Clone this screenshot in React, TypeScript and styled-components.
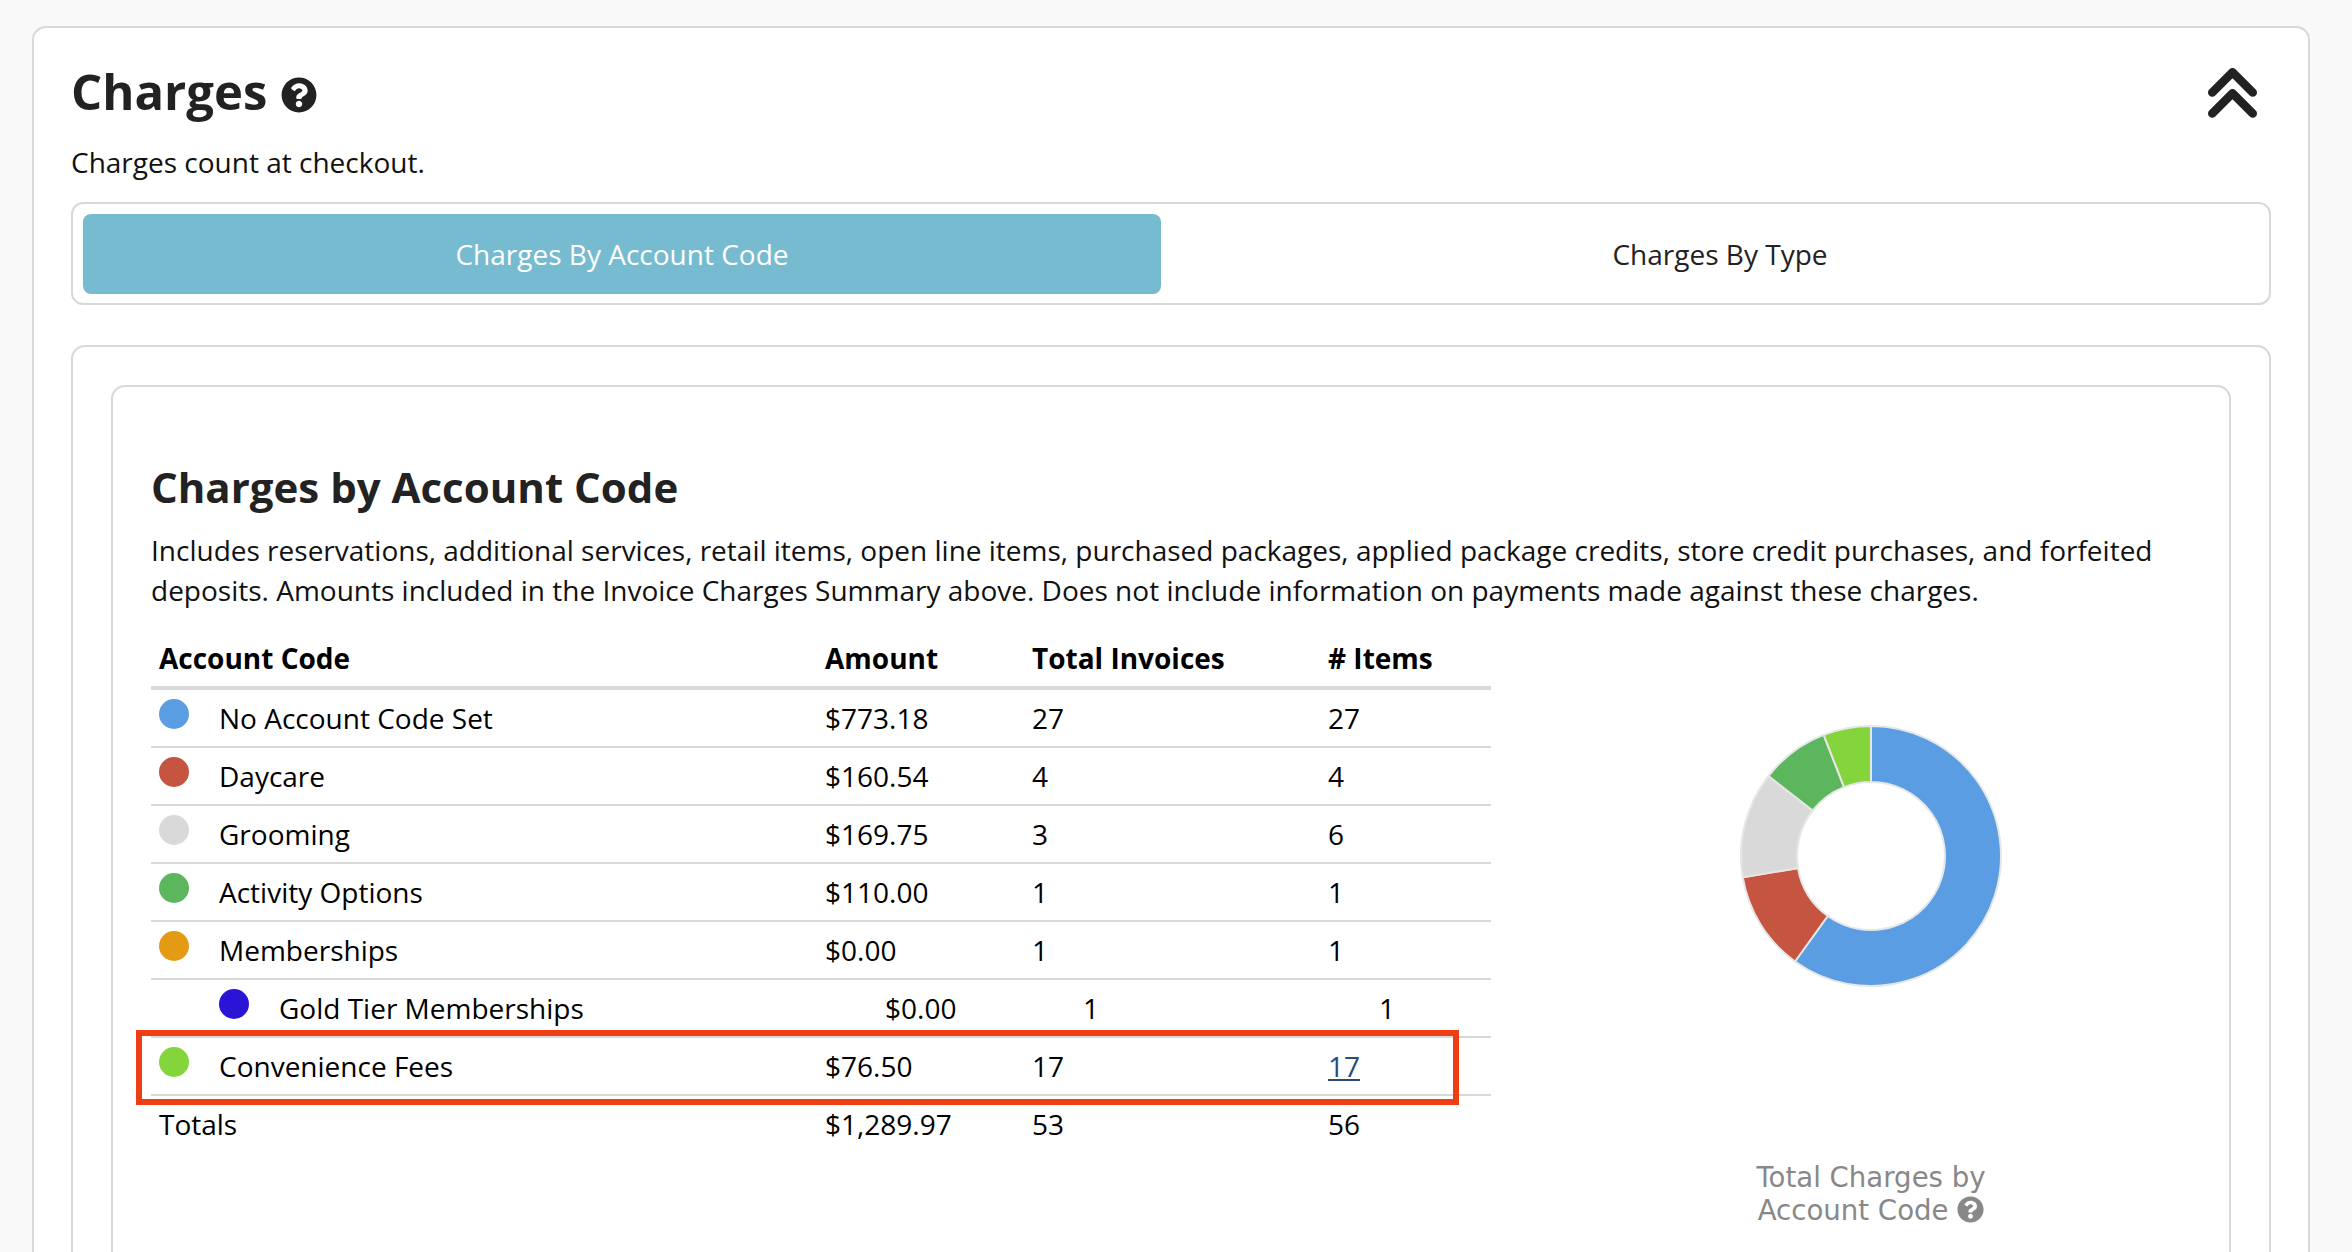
import React from 'react';
import styled, { createGlobalStyle } from 'styled-components';
import { FaQuestionCircle } from 'react-icons/fa';

const GlobalStyle = createGlobalStyle`
  html, body {
    margin: 0;
    height: 100%;
    overflow: hidden;
    background: #f9f9f9;
  }

  body {
    font-family: "Open Sans", "Liberation Sans", sans-serif;
    font-size: 28px;
    color: #000;
  }
`;

const Page = styled.div`
  height: 1252px;
  overflow: hidden;
  padding: 26px 42px 0 32px;
  box-sizing: border-box;
`;

const Card = styled.section`
  background: #fff;
  border: 2px solid #d8d8d8;
  border-radius: 14px;
  padding: 0 37px;
  min-height: 1400px;
`;

const CardHeader = styled.header`
  display: flex;
  justify-content: space-between;
  align-items: flex-start;
  height: 174px;
`;

const Title = styled.h1`
  display: flex;
  align-items: center;
  gap: 14px;
  margin: 28px 0 0;
  height: 70px;
  font-size: 49px;
  font-weight: 700;
  color: #222;

  svg {
    width: 36px;
    height: 36px;
    margin-top: 7px;
  }
`;

const Subtitle = styled.p`
  margin: 16px 0 0;
  line-height: 40px;
  color: #111;
`;

const CollapseButton = styled.button`
  display: flex;
  border: 0;
  padding: 0;
  margin: 40px 14px 0 0;
  background: none;
  color: #222;

  svg {
    width: 49px;
    height: 50px;
  }
`;

const Tabs = styled.div`
  display: flex;
  gap: 20px;
  border: 2px solid #d8d8d8;
  border-radius: 12px;
  padding: 10px 10px 9px;
  height: 103px;
  box-sizing: border-box;
`;

const Tab = styled.div<{ $active?: boolean }>`
  flex: 1;
  display: flex;
  align-items: center;
  justify-content: center;
  border-radius: 8px;
  background: ${(p) => (p.$active ? '#76bbcf' : 'transparent')};
  color: ${(p) => (p.$active ? '#fff' : '#222')};
`;

const Panel = styled.div`
  margin-top: 40px;
  border: 2px solid #d8d8d8;
  border-radius: 14px;
  padding: 38px 38px 0;
  min-height: 1000px;
`;

const InnerPanel = styled.div`
  border: 2px solid #d8d8d8;
  border-radius: 14px;
  padding: 0 37px 0 38px;
  min-height: 1000px;
`;

const SectionTitle = styled.h3`
  margin: 71px 0 0;
  height: 58px;
  line-height: 58px;
  font-size: 42px;
  font-weight: 700;
  color: #222;
`;

const Description = styled.p`
  margin: 14px 0 0;
  line-height: 40px;
  color: #111;
`;

const Report = styled.div`
  display: flex;
  margin-top: 20px;
`;

const Table = styled.div`
  width: 1340px;
  flex-shrink: 0;
`;

const Row = styled.div<{ $head?: boolean; $nested?: boolean; $plain?: boolean; $marked?: boolean }>`
  position: relative;
  display: grid;
  grid-template-columns: ${(p) => (p.$nested ? '666px 198px 296px 1fr' : '666px 207px 296px 1fr')};
  align-items: center;
  height: ${(p) => (p.$head ? '60px' : p.$plain ? '56px' : '58px')};
  box-sizing: border-box;
  padding-left: ${(p) => (p.$nested ? '68px' : '8px')};
  border-bottom: ${(p) => (p.$plain ? '0' : p.$head ? '4px solid #d8d8d8' : '2px solid #d8d8d8')};
  font-weight: ${(p) => (p.$head ? 700 : 400)};

  ${(p) =>
    p.$marked &&
    `
    &::after {
      content: '';
      position: absolute;
      left: -15px;
      right: 32px;
      top: -8px;
      bottom: -11px;
      border: 6px solid #ee3e14;
    }
  `}
`;

const NameCell = styled.div`
  display: flex;
  align-items: center;
  gap: 30px;
`;

const Dot = styled.span<{ $color: string }>`
  width: 30px;
  height: 30px;
  margin-top: -8px;
  border-radius: 50%;
  flex-shrink: 0;
  background: ${(p) => p.$color};
`;

const ItemsLink = styled.a`
  color: #2a4a7c;
  text-decoration: underline;
`;

const ChartColumn = styled.div`
  flex: 1;
  margin-left: 59px;
  display: flex;
  flex-direction: column;
  align-items: center;
  padding-top: 94px;
`;

const Donut = styled.svg`
  width: 264px;
  height: 264px;
  display: block;
`;

const Caption = styled.div`
  margin-top: 173px;
  width: 300px;
  text-align: center;
  font-family: "DejaVu Sans", sans-serif;
  font-size: 27.6px;
  line-height: 33px;
  color: #888;

  svg {
    width: 27px;
    height: 27px;
    vertical-align: -3px;
  }
`;

interface ChargeRow {
  name: string;
  color: string;
  amount: string;
  value: number;
  invoices: string;
  items: string;
  nested?: boolean;
  marked?: boolean;
}

const rows: ChargeRow[] = [
  { name: 'No Account Code Set', color: '#5a9de2', amount: '$773.18', value: 773.18, invoices: '27', items: '27' },
  { name: 'Daycare', color: '#c55441', amount: '$160.54', value: 160.54, invoices: '4', items: '4' },
  { name: 'Grooming', color: '#d9d9d9', amount: '$169.75', value: 169.75, invoices: '3', items: '6' },
  { name: 'Activity Options', color: '#5cb65e', amount: '$110.00', value: 110, invoices: '1', items: '1' },
  { name: 'Memberships', color: '#e59a13', amount: '$0.00', value: 0, invoices: '1', items: '1' },
  { name: 'Gold Tier Memberships', color: '#2a14d6', amount: '$0.00', value: 0, invoices: '1', items: '1', nested: true },
  { name: 'Convenience Fees', color: '#84d43c', amount: '$76.50', value: 76.5, invoices: '17', items: '17', marked: true },
];

const total = rows.reduce((sum, r) => sum + r.value, 0);

const polar = (r: number, turn: number) => {
  const a = turn * 2 * Math.PI;
  return `${(132 + r * Math.sin(a)).toFixed(2)} ${(132 - r * Math.cos(a)).toFixed(2)}`;
};

const slicePath = (from: number, to: number) => {
  const large = to - from > 0.5 ? 1 : 0;
  return `M${polar(130, from)} A130 130 0 ${large} 1 ${polar(130, to)} L${polar(74, to)} A74 74 0 ${large} 0 ${polar(74, from)} Z`;
};

const slices = rows
  .filter((r) => r.value > 0)
  .reduce<{ color: string; from: number; to: number }[]>((acc, r) => {
    const from = acc.length ? acc[acc.length - 1].to : 0;
    return [...acc, { color: r.color, from, to: from + r.value / total }];
  }, []);

const DoubleChevron = () => (
  <svg viewBox="0 0 49 50" fill="none" stroke="currentColor" strokeWidth="8.5" strokeLinecap="round" strokeLinejoin="round">
    <path d="M4.25 24.5 24.5 4.25 44.75 24.5" />
    <path d="M4.25 45.5 24.5 25.25 44.75 45.5" />
  </svg>
);

export default function App() {
  return (
    <Page>
      <GlobalStyle />
      <Card>
        <CardHeader>
          <div>
            <Title>
              Charges <FaQuestionCircle />
            </Title>
            <Subtitle>Charges count at checkout.</Subtitle>
          </div>
          <CollapseButton>
            <DoubleChevron />
          </CollapseButton>
        </CardHeader>
        <Tabs>
          <Tab $active>Charges By Account Code</Tab>
          <Tab>Charges By Type</Tab>
        </Tabs>
        <Panel>
          <InnerPanel>
            <SectionTitle>Charges by Account Code</SectionTitle>
            <Description>
              Includes reservations, additional services, retail items, open line items, purchased packages, applied
              package credits, store credit purchases, and forfeited deposits. Amounts included in the Invoice Charges
              Summary above. Does not include information on payments made against these charges.
            </Description>
            <Report>
              <Table>
                <Row $head>
                  <div>Account Code</div>
                  <div>Amount</div>
                  <div>Total Invoices</div>
                  <div># Items</div>
                </Row>
                {rows.map((r) => (
                  <Row key={r.name} $nested={r.nested} $marked={r.marked}>
                    <NameCell>
                      <Dot $color={r.color} />
                      {r.name}
                    </NameCell>
                    <div>{r.amount}</div>
                    <div>{r.invoices}</div>
                    <div>{r.marked ? <ItemsLink href="#">{r.items}</ItemsLink> : r.items}</div>
                  </Row>
                ))}
                <Row $plain>
                  <div>Totals</div>
                  <div>$1,289.97</div>
                  <div>53</div>
                  <div>56</div>
                </Row>
              </Table>
              <ChartColumn>
                <Donut viewBox="0 0 264 264">
                  {slices.map((s) => (
                    <path key={s.color} d={slicePath(s.from, s.to)} fill={s.color} stroke="#e6e6e6" strokeWidth="2" />
                  ))}
                </Donut>
                <Caption>
                  Total Charges by Account Code <FaQuestionCircle />
                </Caption>
              </ChartColumn>
            </Report>
          </InnerPanel>
        </Panel>
      </Card>
    </Page>
  );
}
